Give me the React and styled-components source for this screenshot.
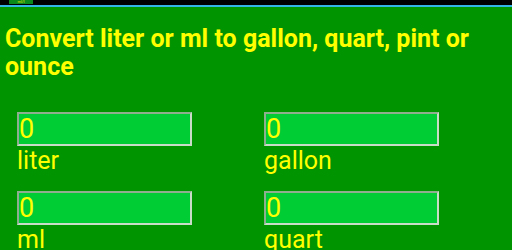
import React from "react";
import styled, { createGlobalStyle } from "styled-components";

const GlobalStyle = createGlobalStyle`
  html, body {
    margin: 0;
    padding: 0;
    background: #009400;
    font-family: Roboto, "Liberation Sans", sans-serif;
    overflow: hidden;
  }
`;

const units = [
  ["liter", "gallon"],
  ["ml", "quart"],
  ["", "pint"],
];

const App = () => {
  return (
    <>
      <GlobalStyle />
      <Page>
        <StatusBar>
          <Thumb>ml/l</Thumb>
        </StatusBar>
        <Accent />
        <Title>Convert liter or ml to gallon, quart, pint or ounce</Title>
        <Grid>
          {units.flat().map((u, i) =>
            u ? (
              <Field key={i}>
                <Input defaultValue="0" />
                <Label>{u}</Label>
              </Field>
            ) : (
              <div key={i} />
            )
          )}
        </Grid>
      </Page>
    </>
  );
};

export default App;

const Page = styled.div`
  width: 512px;
  height: 250px;
  background: #009400;
  overflow: hidden;
`;

const StatusBar = styled.div`
  height: 5px;
  background: #000;
  display: flex;
  padding-left: 9px;
`;

const Thumb = styled.div`
  width: 24px;
  height: 4px;
  background: #0a8a1a;
  color: #e0e000;
  font-size: 4px;
  line-height: 4px;
  text-align: center;
  overflow: hidden;
`;

const Accent = styled.div`
  height: 2px;
  background: #33b5e5;
`;

const Title = styled.h1`
  margin: 0;
  padding: 18px 30px 0 5px;
  color: #ffff00;
  font-size: 25px;
  font-weight: 700;
  line-height: 28px;
`;

const Grid = styled.div`
  display: grid;
  grid-template-columns: 175px 175px;
  column-gap: 72px;
  row-gap: 15px;
  padding: 31px 0 0 17px;
`;

const Field = styled.div`
  display: flex;
  flex-direction: column;
`;

const Input = styled.input`
  box-sizing: border-box;
  width: 175px;
  height: 34px;
  margin: 0;
  padding: 0;
  background: #00cc33;
  border: 2px solid;
  border-color: #8fae8f #c8dcc8 #c8dcc8 #8fae8f;
  color: #ffff00;
  font-family: Roboto, "Liberation Sans", sans-serif;
  font-size: 27px;
  line-height: 30px;
  outline: none;
`;

const Label = styled.div`
  color: #ffff00;
  font-size: 25px;
  line-height: 30px;
`;
